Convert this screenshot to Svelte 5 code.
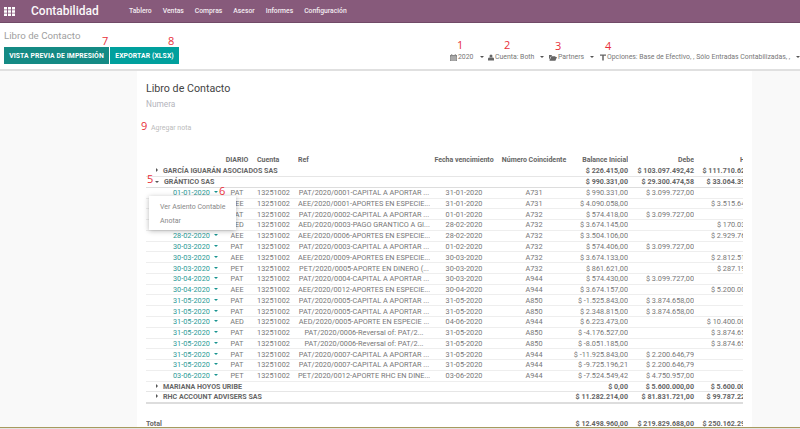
<script>
  const menu = ['Tablero', 'Ventas', 'Compras', 'Asesor', 'Informes', 'Configuración'];
  const rows = [
    ['01-01-2020','PAT','PAT/2020/0001-CAPITAL A APORTAR ...','31-01-2020','A731','990.331,00','3.099.727,00',''],
    ['31-01-2020','AEE','AEE/2020/0001-APORTES EN ESPECIE...','31-01-2020','A731','4.090.058,00','','3.515.640,00'],
    ['01-01-2020','PAT','PAT/2020/0002-CAPITAL A APORTAR ...','01-01-2020','A732','574.418,00','3.099.727,00',''],
    ['28-02-2020','AED','AED/2020/0003-PAGO GRANTICO A GI...','28-02-2020','A732','3.674.145,00','','170.039,00'],
    ['28-02-2020','AEE','AEE/2020/0006-APORTES EN ESPECIE...','28-02-2020','A732','3.504.106,00','','2.929.761,00'],
    ['30-03-2020','PAT','PAT/2020/0003-CAPITAL A APORTAR ...','01-02-2020','A732','574.406,00','3.099.727,00',''],
    ['30-03-2020','AEE','AEE/2020/0009-APORTES EN ESPECIE...','30-03-2020','A732','3.674.133,00','','2.812.512,00'],
    ['30-03-2020','PET','PET/2020/0005-APORTE EN DINERO (...','30-03-2020','A732','861.621,00','','287.191,00'],
    ['30-04-2020','PAT','PAT/2020/0004-CAPITAL A APORTAR ...','30-03-2020','A944','574.430,00','3.099.727,00',''],
    ['30-04-2020','AEE','AEE/2020/0012-APORTES EN ESPECIE...','30-04-2020','A944','3.674.157,00','','5.200.000,00'],
    ['31-05-2020','PAT','PAT/2020/0005-CAPITAL A APORTAR ...','31-05-2020','A850','-1.525.843,00','3.874.658,00',''],
    ['31-05-2020','PAT','PAT/2020/0005-CAPITAL A APORTAR ...','31-05-2020','A850','2.348.815,00','3.874.658,00',''],
    ['31-05-2020','AED','AED/2020/0005-APORTE EN ESPECIE ...','04-06-2020','A944','6.223.473,00','','10.400.000,00'],
    ['31-05-2020','PAT','PAT/2020/0006-Reversal of: PAT/2...','31-05-2020','A850','-4.176.527,00','','3.874.658,00'],
    ['31-05-2020','PAT','PAT/2020/0006-Reversal of: PAT/2...','31-05-2020','A850','-8.051.185,00','','3.874.658,00'],
    ['31-05-2020','PAT','PAT/2020/0007-CAPITAL A APORTAR ...','31-05-2020','A944','-11.925.843,00','2.200.646,79',''],
    ['31-05-2020','PAT','PAT/2020/0007-CAPITAL A APORTAR ...','31-05-2020','A944','-9.725.196,21','2.200.646,79',''],
    ['03-06-2020','PET','PET/2020/0012-APORTE RHC EN DINE...','03-06-2020','A944','-7.524.549,42','4.750.957,00','']
  ];
  const notes = [
    ['1', 'n1'], ['2', 'n2'], ['3', 'n3'], ['4', 'n4'], ['5', 'n5'],
    ['6', 'n6'], ['7', 'n7'], ['8', 'n8'], ['9', 'n9']
  ];
</script>

{#snippet caret()}<span class="caret"></span>{/snippet}

<div class="page">
  <header class="nav">
    <svg class="apps" viewBox="0 0 11 9" width="11" height="9" aria-hidden="true">
      <path fill="#fff" d="M0 0h3v2.5H0zM4 0h3v2.5H4zM8 0h3v2.5H8zM0 3.25h3v2.5H0zM4 3.25h3v2.5H4zM8 3.25h3v2.5H8zM0 6.5h3V9H0zM4 6.5h3V9H4zM8 6.5h3V9H8z"/>
    </svg>
    <span class="brand">Contabilidad</span>
    <nav class="menu">
      {#each menu as m}<span>{m}</span>{/each}
    </nav>
  </header>

  <section class="panel">
    <div class="crumb">Libro de Contacto</div>
    <div class="panel-row">
      <div class="btns">
        <button class="primary">VISTA PREVIA DE IMPRESIÓN</button>
        <button class="secondary">EXPORTAR (XLSX)</button>
      </div>
      <div class="filters">
        <span class="f f1">
          <svg viewBox="0 0 8 8" width="7" height="7"><path fill="#888" d="M0 1h1.500V0h1v1h3V0h1v1H8v7H0zM1 3v4h6V3z"/><path fill="#aaa" d="M1 3h6v4H1z"/></svg>
          2020{@render caret()}
        </span>
        <span class="f f2">
          <svg viewBox="0 0 8 8" width="6" height="7"><circle cx="4" cy="2" r="2" fill="#666"/><path fill="#666" d="M0 8V5.500C0 4.500 1 4 2.500 4h3C7 4 8 4.500 8 5.500V8z"/></svg>
          Cuenta: Both{@render caret()}
        </span>
        <span class="f f3">
          <svg viewBox="0 0 10 8" width="8" height="7"><path fill="#666" d="M0 1h3l1 1h4v1H2L0 7zM2.500 3.500H10L8 8H.5z"/></svg>
          Partners{@render caret()}
        </span>
        <span class="f f4">
          <svg viewBox="0 0 8 8" width="6" height="7"><path fill="#666" d="M0 0h8v1.500H5V8H3V1.500H0z"/></svg>
          Opciones: Base de Efectivo, , Sólo Entradas Contabilizadas, ,{@render caret()}
        </span>
      </div>
    </div>
  </section>

  <main class="content">
    <article class="sheet">
      <h1>Libro de Contacto</h1>
      <div class="numera">Numera</div>
      <div class="addnote">Agregar nota</div>

      <div class="clip">
        <table>
          <colgroup>
            <col style="width:79px"/><col style="width:24px"/><col style="width:49px"/>
            <col style="width:132px"/><col style="width:68px"/><col style="width:72px"/>
            <col style="width:58px"/><col style="width:66px"/><col style="width:65px"/>
          </colgroup>
          <thead>
            <tr>
              <th></th><th>DIARIO</th><th class="cta">Cuenta</th><th class="left">Ref</th>
              <th>Fecha vencimiento</th><th>Número Coincidente</th>
              <th class="num">Balance Inicial</th><th class="num">Debe</th><th class="num">Haber</th>
            </tr>
          </thead>
          <tbody>
            <tr class="g g-light">
              <td colspan="6" class="gname"><span class="tri-right"></span>GARCÍA IGUARÁN ASOCIADOS SAS</td>
              <td class="num">$ 226.415,00</td><td class="num">$ 103.097.492,42</td><td class="num">$ 111.710.620,00</td>
            </tr>
            <tr class="g g-open">
              <td colspan="6" class="gname"><span class="tri-down"></span>GRÁNTICO SAS</td>
              <td class="num">$ 990.331,00</td><td class="num">$ 29.300.474,58</td><td class="num">$ 33.064.390,00</td>
            </tr>
            {#each rows as r}
              <tr class="line">
                <td class="date"><span class="dlink">{r[0]}</span><span class="dcaret"></span></td>
                <td class="c">{r[1]}</td>
                <td class="c">13251002</td>
                <td class="c">{r[2]}</td>
                <td class="c">{r[3]}</td>
                <td class="c">{r[4]}</td>
                <td class="num">$ {r[5]}</td>
                <td class="num">{r[6] ? '$ ' + r[6] : ''}</td>
                <td class="num">{r[7] ? '$ ' + r[7] : ''}</td>
              </tr>
            {/each}
            <tr class="g g-light">
              <td colspan="6" class="gname"><span class="tri-right"></span>MARIANA HOYOS URIBE</td>
              <td class="num">$ 0,00</td><td class="num">$ 5.600.000,00</td><td class="num">$ 5.600.000,00</td>
            </tr>
            <tr class="g g-end">
              <td colspan="6" class="gname"><span class="tri-right"></span>RHC ACCOUNT ADVISERS SAS</td>
              <td class="num">$ 11.282.214,00</td><td class="num">$ 81.831.721,00</td><td class="num">$ 99.787.220,00</td>
            </tr>
            <tr class="spacer"><td colspan="9"></td></tr>
            <tr class="g total">
              <td colspan="6">Total</td>
              <td class="num">$ 12.498.960,00</td><td class="num">$ 219.829.688,00</td><td class="num">$ 250.162.290,00</td>
            </tr>
          </tbody>
        </table>
      </div>

      <div class="dropdown">
        <div>Ver Asiento Contable</div>
        <div>Anotar</div>
      </div>
    </article>
  </main>

  <div class="footline"></div>

  {#each notes as n}<span class="note {n[1]}">{n[0]}</span>{/each}
</div>

<style>
  :global(body) { margin: 0; }
  .page {
    position: relative;
    width: 800px;
    height: 429px;
    overflow: hidden;
    font-family: Roboto, "Liberation Sans", sans-serif;
    color: #666;
    background: #f9f9f9;
    display: flex;
    flex-direction: column;
  }
  .nav {
    height: 23px;
    flex: none;
    box-sizing: border-box;
    background: #875a7b;
    border-bottom: 1px solid #714a67;
    display: flex;
    align-items: center;
    color: #fff;
    padding-left: 4px;
  }
  .apps { margin-right: 16px; }
  .brand { font-size: 12px; font-weight: 500; width: 98px; color: #fbf8fa; }
  .menu { display: flex; gap: 11px; font-size: 6.8px; font-weight: 500; color: #f3ecf1; }
  .panel {
    height: 48px;
    flex: none;
    box-sizing: border-box;
    background: #fff;
    border-bottom: 2px solid #e0e0e0;
    padding: 7px 4px 0;
  }
  .crumb { font-size: 9.7px; line-height: 12px; color: #a0a0a0; }
  .panel-row { display: flex; margin-top: 5px; position: relative; }
  .btns { display: flex; gap: 1px; }
  button {
    height: 17px;
    border: 0;
    padding: 0;
    color: #fff;
    font: 700 6.8px Roboto, sans-serif;
    letter-spacing: 0.1px;
  }
  .primary { width: 105px; background: #148a84; }
  .secondary { width: 69px; background: #00a09d; }
  .filters { display: flex; align-items: center; font-size: 6.9px; color: #777; margin-left: 271px; padding-top: 3px; }
  .f { display: inline-flex; align-items: center; gap: 1px; white-space: nowrap; }
  .f1 { width: 38px; }
  .f2 { width: 61px; }
  .f3 { width: 51px; }
  .caret {
    display: inline-block;
    margin-left: 5px;
    border-left: 2px solid transparent;
    border-right: 2px solid transparent;
    border-top: 2px solid #555;
  }
  .content { flex: 1; padding: 0 48px 0 137px; min-height: 0; }
  .sheet {
    position: relative;
    background: #fff;
    height: 100%;
    width: 615px;
    box-sizing: border-box;
    padding: 11px 0 0 9px;
  }
  h1 { margin: 0; font-size: 10.7px; line-height: 14px; font-weight: 400; color: #444; }
  .numera { font-size: 8.3px; line-height: 10px; color: #b4b4bc; margin-top: 3px; }
  .addnote { font-size: 7px; line-height: 8px; color: #bbb; margin: 15px 0 0 5px; }
  .clip { width: 597px; overflow: hidden; margin-top: 23px; }
  table { border-collapse: collapse; table-layout: fixed; width: 613px; font-size: 7.3px; }
  th, td { padding: 0; height: 10.78px; line-height: 9px; box-sizing: border-box; white-space: nowrap; overflow: hidden; }
  th { font-weight: 700; font-size: 7px; text-align: center; color: #666; }
  th.left { text-align: left; }
  th.cta { text-align: left; padding-left: 8px; }
  .num { text-align: right; }
  th.num { text-align: right; }
  td.c { text-align: center; color: #777; }
  .line td { border-bottom: 1px solid #eee; color: #777; }
  .date { padding-left: 27px; }
  .line td.date { color: #2a9a96; }
  .line td.num { color: #777; }
  .dcaret {
    display: inline-block;
    margin-left: 4px;
    vertical-align: 2px;
    border-left: 2px solid transparent;
    border-right: 2px solid transparent;
    border-top: 2px solid #17938f;
  }
  .g td { font-weight: 700; font-size: 7.1px; color: #666; overflow: visible; }
  .g-open td { border-bottom: 1.5px solid #ddd; }
  .g-light td { border-bottom: 1px solid #e6e6e6; }
  .g-end td { border-bottom: 2px solid #ddd; }
  .gname { padding-left: 9px; }
  .tri-right, .tri-down { display: inline-block; margin-right: 5px; vertical-align: 1px; }
  .tri-right { border-top: 2px solid transparent; border-bottom: 2px solid transparent; border-left: 2.5px solid #555; margin-left: 1px; }
  .tri-down { border-left: 2px solid transparent; border-right: 2px solid transparent; border-top: 2.5px solid #555; }
  .spacer td { height: 15.8px; }
  .dropdown {
    position: absolute;
    left: 12px;
    top: 125px;
    width: 87px;
    height: 34px;
    box-sizing: border-box;
    background: #fff;
    box-shadow: 0 1px 5px rgba(0,0,0,.28);
    padding: 5px 0 0 11px;
    font-size: 7px;
    color: #888;
    line-height: 13.5px;
  }
  .footline {
    position: absolute;
    left: 0;
    right: 0;
    bottom: 0;
    height: 2px;
    box-sizing: border-box;
    border-top: 1px solid #a79a5e;
    background: #e4e4e4;
  }
  .note { position: absolute; color: #e8303a; font-size: 11px; line-height: 12px; font-family: "Open Sans", sans-serif; }
  .n1 { left: 457px; top: 39px; }
  .n2 { left: 504px; top: 39px; }
  .n3 { left: 555px; top: 40px; }
  .n4 { left: 605px; top: 40px; }
  .n5 { left: 147px; top: 173px; }
  .n6 { left: 219px; top: 185px; }
  .n7 { left: 102px; top: 35px; }
  .n8 { left: 168px; top: 35px; }
  .n9 { left: 141px; top: 120px; }
</style>
